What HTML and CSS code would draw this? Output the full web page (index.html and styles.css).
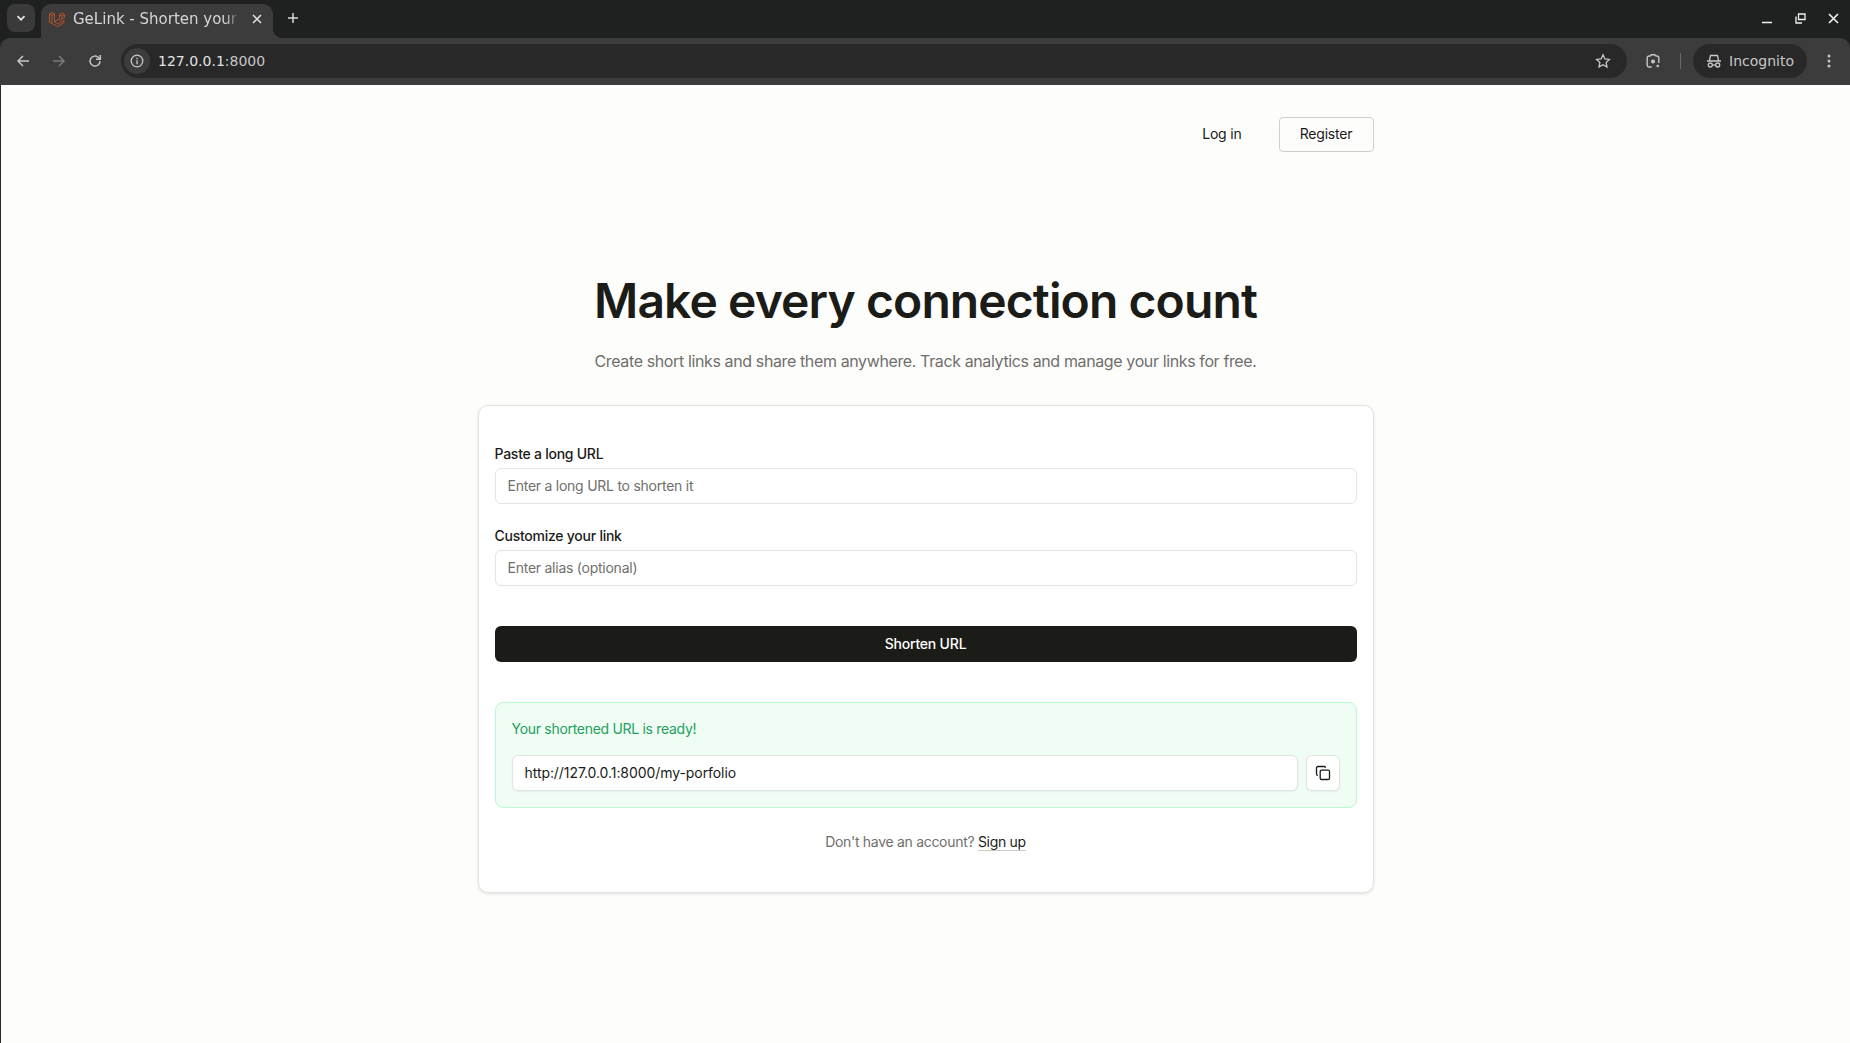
FILE: index.html
```html
<!DOCTYPE html>
<html lang="en">
<head>
<meta charset="utf-8">
<title>GeLink - Shorten your links</title>
<link rel="stylesheet" href="styles.css">
</head>
<body>
<div class="window">
  <div class="tabstrip">
    <button class="tab-search"><svg width="12" height="12" viewBox="0 0 12 12"><path d="M2.5 4.2 6 7.7l3.5-3.5" fill="none" stroke="#e3e3e3" stroke-width="1.7"/></svg></button>
    <div class="tab">
      <svg class="favicon" width="16" height="16" viewBox="0 0 16 16" fill="none" stroke="#b5532a" stroke-width="1"><path d="M.5 3 3 1.500 5.500 3v7.800L8.500 12.800M.5 3v8.200l8 4.300 6.500-3.800V9.500l-6.500 3.500M.5 3 3 4.500 5.500 3M3 4.500v7.800M5.500 10.800l5-3V3.500L13 2l2.500 1.500v3l-5 2.800M10.500 3.500 13 5l2.500-1.500M13 5v3"/></svg>
      <span class="tab-title">GeLink - Shorten your</span>
      <svg class="tab-close" width="10" height="10" viewBox="0 0 10 10"><path d="M1 1l8 8M9 1 1 9" stroke="#e3e3e3" stroke-width="1.500"/></svg>
    </div>
    <svg class="new-tab" width="12" height="12" viewBox="0 0 12 12"><path d="M6 1v10M1 6h10" stroke="#d8d8d8" stroke-width="1.500"/></svg>
    <div class="window-controls">
      <svg width="11" height="11" viewBox="0 0 11 11"><path d="M0 9.500h10" stroke="#f2f2f2" stroke-width="1.500"/></svg>
      <svg width="11" height="11" viewBox="0 0 11 11" fill="none" stroke="#f2f2f2" stroke-width="1.300"><path d="M3.500 1h6.500v5.500H3.500z"/><path d="M1 3.500V10h6"/></svg>
      <svg width="11" height="11" viewBox="0 0 11 11"><path d="M1 1l9 9M10 1l-9 9" stroke="#f2f2f2" stroke-width="1.600"/></svg>
    </div>
  </div>
  <div class="toolbar">
    <svg width="16" height="16" viewBox="0 0 16 16" fill="none" stroke="#c7c7c7" stroke-width="1.500"><path d="M14 8H3M8 3 3 8l5 5"/></svg>
    <svg width="16" height="16" viewBox="0 0 16 16" fill="none" stroke="#7a7a7a" stroke-width="1.500"><path d="M2 8h11M8 3l5 5-5 5"/></svg>
    <svg width="16" height="16" viewBox="0 0 16 16" fill="none" stroke="#c7c7c7" stroke-width="1.500"><path d="M13 8a5 5 0 1 1-1.500-3.500L13 6"/><path d="M13.300 2v4.300H9" /></svg>
    <div class="omnibox">
      <span class="info-chip"><svg width="14" height="14" viewBox="0 0 14 14" fill="none" stroke="#c7c7c7" stroke-width="1.300"><circle cx="7" cy="7" r="5.800"/><path d="M7 6.200v4M7 3.800v1.400"/></svg></span>
      <span class="address"><span class="host">127.0.0.1</span><span class="port">:8000</span></span>
      <svg class="star" width="16" height="16" viewBox="0 0 16 16" fill="none" stroke="#c7c7c7" stroke-width="1.300"><path d="m8 1.800 1.900 4.100 4.500.5-3.300 3 .9 4.500L8 11.700l-4 2.200.9-4.500-3.300-3 4.500-.5z"/></svg>
    </div>
    <svg class="lens" width="16" height="16" viewBox="0 0 16 16" fill="none" stroke="#c7c7c7" stroke-width="1.400"><path d="M5.500 3H4.200A2 2 0 0 0 2.200 5v7a2 2 0 0 0 2 2h2.500M10.500 3h1.300a2 2 0 0 1 2 2v5M5.500 3l.7-1.200h3.600L10.500 3"/><circle cx="8" cy="8.500" r="2" fill="#c7c7c7" stroke="none"/><circle cx="12.700" cy="13" r="1.300" fill="#c7c7c7" stroke="none"/></svg>
    <span class="tool-sep"></span>
    <div class="incognito">
      <svg width="16" height="16" viewBox="0 0 16 16" fill="none" stroke="#c7c7c7" stroke-width="1.300"><path d="M1 8h14M3.500 7.500l1-5h7l1 5" /><circle cx="4.300" cy="12" r="2"/><circle cx="11.700" cy="12" r="2"/><path d="M6.300 12h3.400"/></svg>
      <span>Incognito</span>
    </div>
    <svg class="menu" width="4" height="14" viewBox="0 0 4 14" fill="#c7c7c7"><circle cx="2" cy="2" r="1.500"/><circle cx="2" cy="7" r="1.500"/><circle cx="2" cy="12" r="1.500"/></svg>
  </div>
  <div class="viewport">
  <main class="page">
    <nav class="nav">
      <a class="nav-login">Log in</a>
      <a class="nav-register">Register</a>
    </nav>
    <section class="hero">
      <h1>Make every connection count</h1>
      <p>Create short links and share them anywhere. Track analytics and manage your links for free.</p>
    </section>
    <section class="card">
      <form class="form">
        <div class="field">
          <label>Paste a long URL</label>
          <div class="input placeholder">Enter a long URL to shorten it</div>
        </div>
        <div class="field">
          <label>Customize your link</label>
          <div class="input placeholder">Enter alias (optional)</div>
        </div>
        <div class="submit">Shorten URL</div>
      </form>
      <div class="result">
        <div class="result-title">Your shortened URL is ready!</div>
        <div class="result-row">
          <div class="input value">http://127.0.0.1:8000/my-porfolio</div>
          <div class="copy"><svg width="16" height="16" viewBox="0 0 16 16" fill="none" stroke="#1b1b18" stroke-width="1.300"><rect x="5.200" y="5.200" width="9.300" height="9.300" rx="1.300"/><path d="M10.500 2.800V2.500A1.500 1.500 0 0 0 9 1.500H3A1.500 1.500 0 0 0 1.500 3v6a1.500 1.500 0 0 0 1.300 1.500"/></svg></div>
        </div>
      </div>
      <p class="signup">Don't have an account? <a>Sign up</a></p>
    </section>
  </main>
  </div>
</div>
</body>
</html>
```
FILE: styles.css
```css
* { box-sizing: border-box; }
html, body { margin: 0; height: 100%; overflow: hidden; }
body { background: #fdfdfc; font-family: "Inter", "Noto Sans", sans-serif; color: #1b1b18; }
.window { height: 1043px; display: flex; flex-direction: column; background: #1f2121; }
.tabstrip { height: 38px; flex: none; background: #1f2121; display: flex; align-items: flex-end; padding-left: 7px; position: relative; }
.tab-search { width: 28px; height: 28px; margin: 0 6px 6px 0; border: 0; border-radius: 8px; padding: 0; background: #3a3a3a; display: flex; align-items: center; justify-content: center; }
.tab { width: 232px; height: 34px; background: #3c3c3c; border-radius: 10px 10px 0 0; display: flex; align-items: center; padding: 0 10px 5px 8px; position: relative; font-family: "DejaVu Sans", sans-serif; font-size: 15px; color: #d6d6d6; }
.tab::after { content: ""; position: absolute; right: -10px; bottom: 0; width: 10px; height: 10px; background: radial-gradient(circle at 100% 0, transparent 10px, #3c3c3c 10.500px); }
.favicon { flex: none; margin-right: 8px; }
.tab-title { flex: 1; white-space: nowrap; overflow: hidden; -webkit-mask-image: linear-gradient(90deg, #000 92%, transparent); mask-image: linear-gradient(90deg, #000 92%, transparent); }
.tab-close { flex: none; margin-left: 13px; margin-right: 1px; }
.new-tab { margin: 0 0 14px 14px; }
.window-controls { margin: 0 11px 14px auto; display: flex; gap: 22px; }
.toolbar { height: 47px; flex: none; background: #3c3c3c; border-radius: 10px 10px 0 0; display: flex; align-items: center; padding: 0 0 1px 15px; }
.toolbar > svg:nth-child(2) { margin-left: 20px; }
.toolbar > svg:nth-child(3) { margin-left: 20px; margin-right: 18px; }
.omnibox { width: 1506px; height: 34px; border-radius: 17px; background: #282828; display: flex; align-items: center; padding-left: 3px; padding-right: 16px; }
.info-chip { width: 26px; height: 26px; border-radius: 50%; background: #3c3c3c; display: flex; align-items: center; justify-content: center; }
.address { margin-left: 8px; font-family: "DejaVu Sans", sans-serif; font-size: 14px; }
.host { color: #e3e3e3; }
.port { color: #c7c7c7; }
.star { margin-left: auto; }
.lens { margin-left: 18px; }
.tool-sep { width: 1px; height: 16px; background: #6a6a6a; margin: 0 12px 0 19px; }
.incognito { width: 114px; height: 34px; border-radius: 17px; background: #282828; display: flex; align-items: center; gap: 7px; padding-left: 13px; font-family: "DejaVu Sans", sans-serif; font-size: 14px; color: #c7c7c7; }
.menu { margin-left: 20px; }
.viewport { flex: 1; background: #fdfdfc; border-left: 1px solid #2a2a2a; }
.page { width: 896px; margin: 0 auto; height: 100%; }
.nav { display: flex; justify-content: flex-end; align-items: center; gap: 17px; padding-top: 32px; height: 67px; font-size: 14px; }
.nav-login { padding: 0 20px; line-height: 34px; margin-bottom: 1px; letter-spacing: -.2px; }
.nav-register { width: 95px; height: 35px; line-height: 32px; text-align: center; border: 1px solid #cfcfcb; border-radius: 4px; letter-spacing: -.2px; }
.hero { text-align: center; padding-top: 119px; }
.hero h1 { margin: 0; font-size: 48px; line-height: 60px; font-weight: 600; letter-spacing: -.9px; color: #1b1b18; }
.hero p { margin: 18px 0 0; font-size: 16px; line-height: 24px; color: #706f6c; letter-spacing: -.38px; }
.card { margin-top: 32px; height: 488px; background: #fff; border: 1px solid #e3e3e0; border-radius: 10px; box-shadow: 0 1px 3px rgba(0,0,0,.12); padding: 38px 16px 0; }
.form { display: flex; flex-direction: column; }
.field { display: flex; flex-direction: column; gap: 4px; margin-bottom: 22px; }
.field label { font-size: 14px; line-height: 20px; font-weight: 500; letter-spacing: -.25px; }
.input { height: 36px; line-height: 34px; border: 1px solid #e3e3e0; border-radius: 6px; background: #fff; padding: 0 12px; font-size: 14px; letter-spacing: -.25px; }
.placeholder { color: #706f6c; }
.submit { margin-top: 18px; height: 36px; line-height: 36px; text-align: center; background: #1b1b18; color: #fff; border-radius: 6px; font-size: 14px; font-weight: 500; letter-spacing: -.2px; }
.result { margin-top: 40px; height: 106px; background: #f0fdf4; border: 1px solid #bbf7d0; border-radius: 8px; padding: 16px; }
.result-title { font-size: 14px; line-height: 20px; color: #25a05e; letter-spacing: -.3px; }
.result-row { display: flex; gap: 8px; margin-top: 16px; }
.value { flex: 1; color: #1b1b18; letter-spacing: -.07px; box-shadow: 0 1px 2px rgba(0,0,0,.06); }
.copy { width: 34px; height: 36px; flex: none; background: #fff; border: 1px solid #e3e3e0; border-radius: 6px; display: flex; align-items: center; justify-content: center; box-shadow: 0 1px 2px rgba(0,0,0,.06); }
.signup { margin: 24px 0 0; text-align: center; font-size: 14px; line-height: 20px; color: #706f6c; letter-spacing: -.3px; }
.signup a { color: #1b1b18; text-decoration: underline; text-decoration-color: #c8c8c4; text-underline-offset: 3px; }
```
